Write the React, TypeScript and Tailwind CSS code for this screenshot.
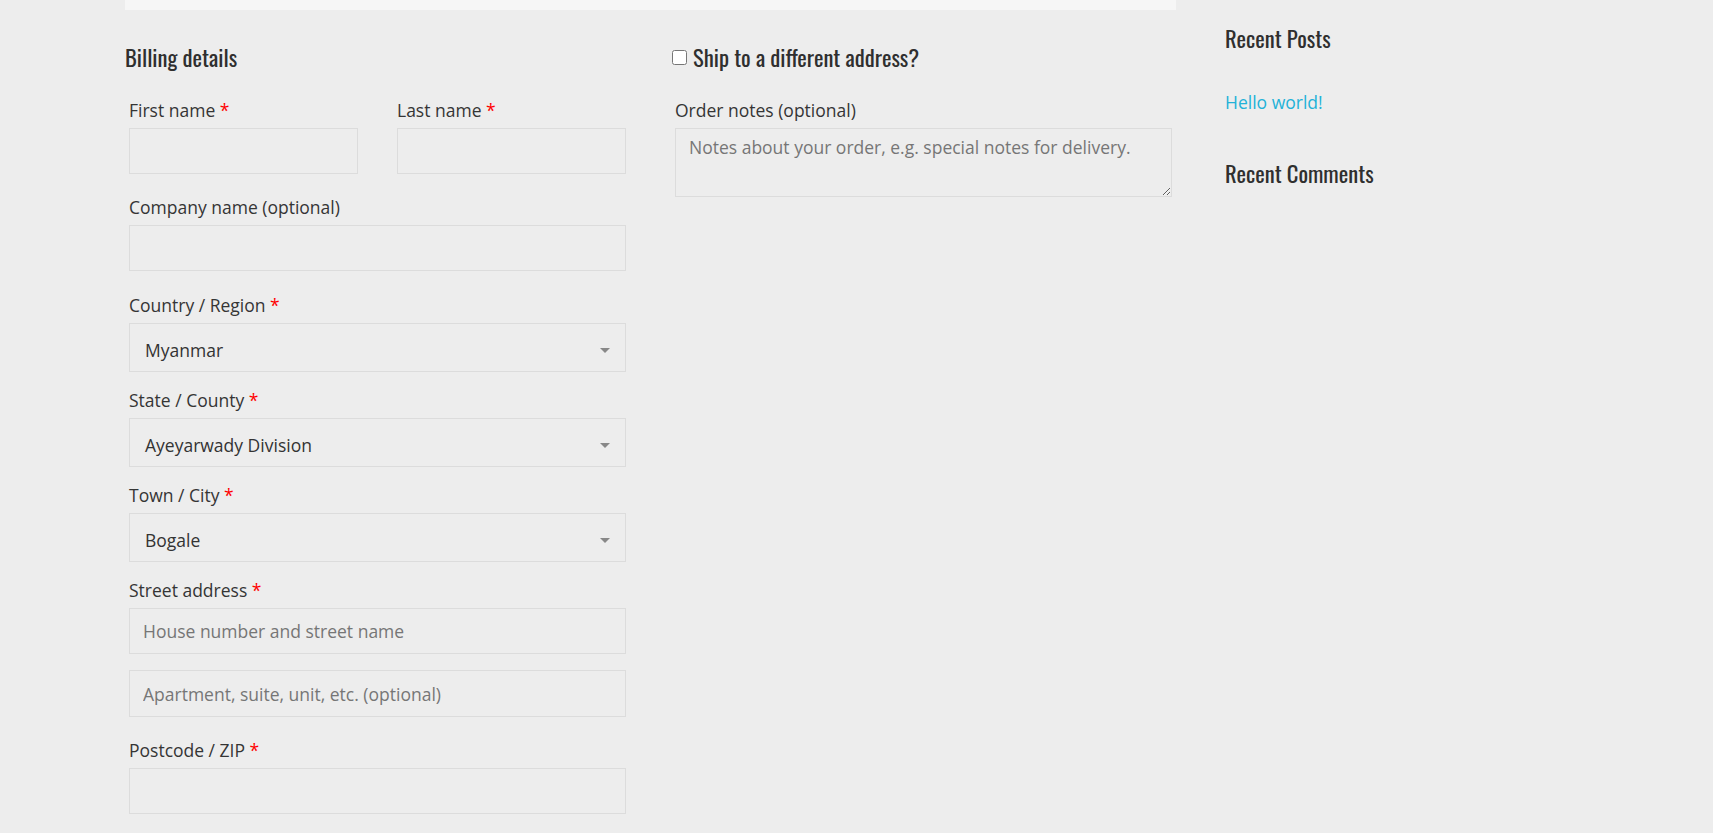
import React from 'react';

const heading = "font-['Oswald','Liberation_Sans_Narrow','Arial_Narrow',sans-serif] text-[22.6px] leading-[30px] h-[30px] font-normal text-[#2f2f2f]";

const Req = () => <span className="text-[#ff0000]"> *</span>;

interface FieldLabelProps {
  children: React.ReactNode;
  required?: boolean;
}

const FieldLabel = ({ children, required }: FieldLabelProps) => (
  <label className="block h-[26px] leading-[26px] mb-[5px] whitespace-nowrap">
    {children}
    {required && <Req />}
  </label>
);

const TextInput = ({ placeholder = '', tall = false }: { placeholder?: string; tall?: boolean }) => (
  <input
    type="text"
    placeholder={placeholder}
    className={
      'block w-full bg-transparent border border-[#dcdcdc] px-[13px] outline-none text-[#333] placeholder:text-[#767676] ' +
      (tall ? 'h-[47px]' : 'h-[46px]')
    }
  />
);

const SelectBox = ({ value }: { value: string }) => (
  <div className="flex items-center justify-between h-[49px] border border-[#dcdcdc] pl-[15px] pr-[15px] pt-[5px]">
    <span className="text-[#333]">{value}</span>
    <span className="w-0 h-0 border-x-[5px] border-x-transparent border-t-[5px] border-t-[#888]" />
  </div>
);

export default function App() {
  return (
    <div className="min-h-[833px] bg-[#ededed] text-[#353535] font-['Open_Sans',sans-serif] text-[17.5px]">
      <div className="flex pl-[125px]">
        <main className="w-[1051px] shrink-0">
          <div className="h-[10px] bg-[#f6f6f6]" />

          <div className="flex justify-between mt-[32px]">
            {/* billing column */}
            <div className="w-[505px]">
              <h3 className={heading + ' mb-[25px]'}>Billing details</h3>

              <div className="pl-[4px] pr-[4px]">
                <div className="grid grid-cols-[229px_229px] gap-x-[39px] mb-[20px]">
                  <div>
                    <FieldLabel required>First name</FieldLabel>
                    <TextInput />
                  </div>
                  <div>
                    <FieldLabel required>Last name</FieldLabel>
                    <TextInput />
                  </div>
                </div>

                <div className="mb-[21px]">
                  <FieldLabel>Company name (optional)</FieldLabel>
                  <TextInput />
                </div>

                <div className="mb-[15px]">
                  <FieldLabel required>Country / Region</FieldLabel>
                  <SelectBox value="Myanmar" />
                </div>

                <div className="mb-[15px]">
                  <FieldLabel required>State / County</FieldLabel>
                  <SelectBox value="Ayeyarwady Division" />
                </div>

                <div className="mb-[15px]">
                  <FieldLabel required>Town / City</FieldLabel>
                  <SelectBox value="Bogale" />
                </div>

                <div className="mb-[16px]">
                  <FieldLabel required>Street address</FieldLabel>
                  <TextInput placeholder="House number and street name" />
                </div>

                <div className="mb-[20px]">
                  <TextInput tall placeholder="Apartment, suite, unit, etc. (optional)" />
                </div>

                <div>
                  <FieldLabel required>Postcode / ZIP</FieldLabel>
                  <TextInput />
                </div>
              </div>
            </div>

            {/* shipping / notes column */}
            <div className="w-[505px]">
              <h3 className={heading + ' mb-[25px] flex items-center gap-[6px] pl-[1px]'}>
                <input type="checkbox" className="m-0 w-[15px] h-[15px]" />
                <span>Ship to a different address?</span>
              </h3>

              <div className="pl-[4px] pr-[4px]">
                <FieldLabel>Order notes (optional)</FieldLabel>
                <textarea
                  rows={2}
                  placeholder="Notes about your order, e.g. special notes for delivery."
                  className="block w-full h-[69px] bg-transparent border border-[#dcdcdc] px-[13px] pt-[5px] leading-[26px] outline-none text-[#333] placeholder:text-[#767676]"
                />
              </div>
            </div>
          </div>
        </main>

        <aside className="ml-[49px] w-[300px] pt-[23px]">
          <h2 className={heading}>Recent Posts</h2>
          <ul className="mt-[36px]">
            <li className="leading-[26px]">
              <a href="#" className="text-[#22b2d8]">Hello world!</a>
            </li>
          </ul>
          <h2 className={heading + ' mt-[43px]'}>Recent Comments</h2>
        </aside>
      </div>
    </div>
  );
}
